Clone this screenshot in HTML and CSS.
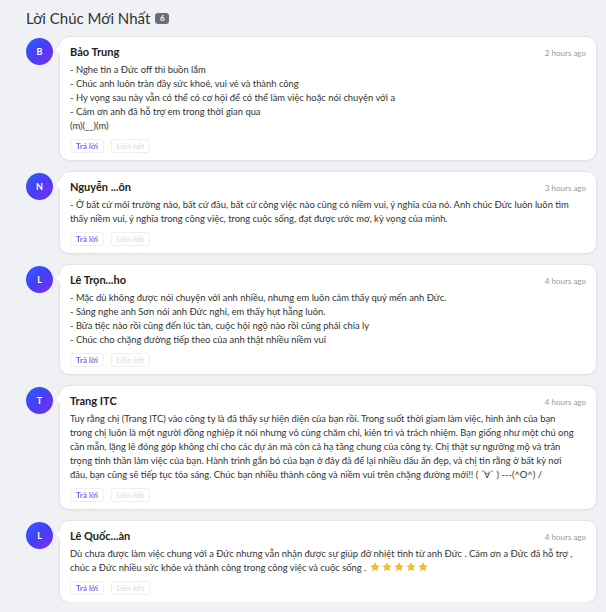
FILE: index.html
```html
<!DOCTYPE html>
<html lang="vi">
<head>
<meta charset="utf-8">
<title>Lời Chúc Mới Nhất</title>
<link rel="stylesheet" href="styles.css">
</head>
<body>
<div class="page">
  <header class="head">
    <h2 class="title">Lời Chúc Mới Nhất</h2>
    <span class="badge">6</span>
  </header>
  <ul class="list">
    <li class="item">
      <div class="avatar">B</div>
      <div class="card">
        <div class="card-top"><span class="name">Bảo Trung</span><span class="time">2 hours ago</span></div>
        <div class="msg">- Nghe tin a Đức off thì buồn lắm<br>- Chúc anh luôn tràn đầy sức khoẻ, vui vẻ và thành công<br>- Hy vọng sau này vẫn có thể có cơ hội để có thể làm việc hoặc nói chuyện với a<br>- Cảm ơn anh đã hỗ trợ em trong thời gian qua<br>(m)(__)(m)</div>
        <div class="actions"><span class="btn reply">Trả lời</span><span class="btn link">Liên kết</span></div>
      </div>
    </li>
    <li class="item">
      <div class="avatar">N</div>
      <div class="card">
        <div class="card-top"><span class="name">Nguyễn ...ôn</span><span class="time">3 hours ago</span></div>
        <div class="msg">- Ở bất cứ môi trường nào, bất cứ đâu, bất cứ công việc nào cũng có niềm vui, ý nghĩa của nó. Anh chúc Đức luôn luôn tìm<br>thấy niềm vui, ý nghĩa trong công việc, trong cuộc sống, đạt được ước mơ, kỳ vọng của mình.</div>
        <div class="actions"><span class="btn reply">Trả lời</span><span class="btn link">Liên kết</span></div>
      </div>
    </li>
    <li class="item">
      <div class="avatar">L</div>
      <div class="card">
        <div class="card-top"><span class="name">Lê Trọn...ho</span><span class="time">4 hours ago</span></div>
        <div class="msg">- Mặc dù không được nói chuyện với anh nhiều, nhưng em luôn cảm thấy quý mến anh Đức.<br>- Sáng nghe anh Sơn nói anh Đức nghỉ, em thấy hụt hẫng luôn.<br>- Bữa tiệc nào rồi cũng đến lúc tàn, cuộc hội ngộ nào rồi cũng phải chia ly<br>- Chúc cho chặng đường tiếp theo của anh thật nhiều niềm vui</div>
        <div class="actions"><span class="btn reply">Trả lời</span><span class="btn link">Liên kết</span></div>
      </div>
    </li>
    <li class="item">
      <div class="avatar">T</div>
      <div class="card">
        <div class="card-top"><span class="name">Trang ITC</span><span class="time">4 hours ago</span></div>
        <div class="msg">Tuy rằng chị (Trang ITC) vào công ty là đã thấy sự hiện diện của bạn rồi. Trong suốt thời giam làm việc, hình ảnh của bạn<br>trong chị luôn là một người đồng nghiệp ít nói nhưng vô cùng chăm chỉ, kiên trì và trách nhiệm. Bạn giống như một chú ong<br>cần mẫn, lặng lẽ đóng góp không chỉ cho các dự án mà còn cả hạ tầng chung của công ty. Chị thật sự ngưỡng mộ và trân<br>trọng tinh thần làm việc của bạn. Hành trình gắn bó của bạn ở đây đã để lại nhiều dấu ấn đẹp, và chị tin rằng ở bất kỳ nơi<br>đâu, bạn cũng sẽ tiếp tục tỏa sáng. Chúc bạn nhiều thành công và niềm vui trên chặng đường mới!! ( ´∀` ) ---(^O^) /</div>
        <div class="actions"><span class="btn reply">Trả lời</span><span class="btn link">Liên kết</span></div>
      </div>
    </li>
    <li class="item">
      <div class="avatar">L</div>
      <div class="card">
        <div class="card-top"><span class="name">Lê Quốc...àn</span><span class="time">4 hours ago</span></div>
        <div class="msg">Dù chưa được làm việc chung với a Đức nhưng vẫn nhận được sự giúp đỡ nhiệt tình từ anh Đức . Cảm ơn a Đức đã hỗ trợ ,<br>chúc a Đức nhiều sức khỏe và thành công trong công việc và cuộc sống . <span class="stars"><svg class="star" viewBox="0 0 24 24"><path d="M12 2.5l2.9 6.1 6.6.8-4.9 4.6 1.3 6.6L12 17.3l-5.9 3.3 1.3-6.6-4.9-4.6 6.6-.8z"/></svg><svg class="star" viewBox="0 0 24 24"><path d="M12 2.5l2.9 6.1 6.6.8-4.9 4.6 1.3 6.6L12 17.3l-5.9 3.3 1.3-6.6-4.9-4.6 6.6-.8z"/></svg><svg class="star" viewBox="0 0 24 24"><path d="M12 2.5l2.9 6.1 6.6.8-4.9 4.6 1.3 6.6L12 17.3l-5.9 3.3 1.3-6.6-4.9-4.6 6.6-.8z"/></svg><svg class="star" viewBox="0 0 24 24"><path d="M12 2.5l2.9 6.1 6.6.8-4.9 4.6 1.3 6.6L12 17.3l-5.9 3.3 1.3-6.6-4.9-4.6 6.6-.8z"/></svg><svg class="star" viewBox="0 0 24 24"><path d="M12 2.5l2.9 6.1 6.6.8-4.9 4.6 1.3 6.6L12 17.3l-5.9 3.3 1.3-6.6-4.9-4.6 6.6-.8z"/></svg></span></div>
        <div class="actions"><span class="btn reply">Trả lời</span><span class="btn link">Liên kết</span></div>
      </div>
    </li>
  </ul>
</div>
</body>
</html>
```

FILE: styles.css
```css
html, body {
  margin: 0;
  padding: 0;
  background: #f0f1f5;
}
body {
  font-family: Lato, "Noto Sans", sans-serif;
  color: #333;
}
.page {
  padding: 8px 10px 0 26px;
}
.head {
  display: flex;
  align-items: center;
  gap: 5px;
  height: 20px;
  margin-bottom: 9px;
}
.title {
  margin: 0;
  font-size: 15px;
  font-weight: 400;
  line-height: 20px;
  color: #333;
}
.badge {
  display: inline-flex;
  align-items: center;
  justify-content: center;
  width: 14px;
  height: 11px;
  border-radius: 3px;
  background: #6b6e76;
  color: #fff;
  font-size: 8px;
  font-weight: 700;
}
.list {
  list-style: none;
  margin: 0;
  padding: 0;
  display: flex;
  flex-direction: column;
  gap: 12px;
}
.item {
  display: flex;
  align-items: flex-start;
  gap: 7px;
}
.avatar {
  flex: 0 0 27px;
  width: 27px;
  height: 27px;
  margin-top: 1px;
  border-radius: 50%;
  background: linear-gradient(135deg, #2563ff 0%, #4a3cf5 50%, #7b2ff0 100%);
  color: #fff;
  font-size: 9px;
  font-weight: 700;
  display: flex;
  align-items: center;
  justify-content: center;
}
.card {
  position: relative;
  flex: 1;
  background: #fff;
  border-radius: 9px;
  padding: 7px 10px 7px 10px;
  box-shadow: 0 0 0 1px rgba(0, 0, 0, 0.035), 0 1px 4px rgba(0, 0, 0, 0.05);
}
.card::before {
  content: "";
  position: absolute;
  left: -3px;
  top: 10px;
  width: 6px;
  height: 6px;
  background: #fff;
  transform: rotate(45deg);
}
.card-top {
  display: flex;
  justify-content: space-between;
  align-items: baseline;
  height: 16px;
}
.name {
  font-size: 11px;
  font-weight: 700;
  line-height: 16px;
  color: #222;
}
.time {
  font-size: 8px;
  color: #9a9a9a;
}
.msg {
  margin-top: 3px;
  font-size: 9.4px;
  line-height: 14px;
  color: #333;
}
.stars {
  display: inline-flex;
  gap: 2px;
  vertical-align: -1px;
  margin-left: 1px;
}
.star {
  width: 10px;
  height: 10px;
  fill: #f6be2c;
  stroke: #e3a21a;
  stroke-width: 1.2;
}
.actions {
  display: flex;
  gap: 7px;
  margin-top: 6px;
}
.btn {
  display: inline-flex;
  align-items: center;
  justify-content: center;
  height: 12px;
  border: 1px solid #eeeff2;
  border-radius: 3px;
  font-size: 8px;
  font-weight: 700;
}
.reply {
  width: 32px;
  background: linear-gradient(90deg, #3b6ff5, #9a55ef);
  -webkit-background-clip: text;
  background-clip: text;
  color: transparent;
}
.link {
  width: 37px;
  color: #e2e3e7;
}
```
